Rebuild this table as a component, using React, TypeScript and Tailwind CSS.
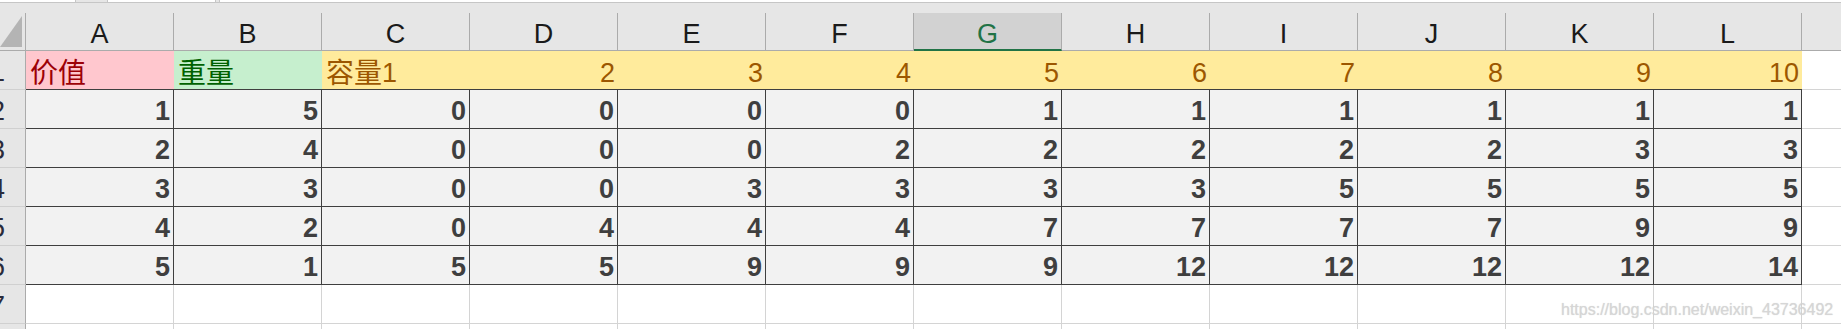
const COLS = ["A", "B", "C", "D", "E", "F", "G", "H", "I", "J", "K", "L"];

const HEAD_ROW = ["价值", "重量", "容量1", "2", "3", "4", "5", "6", "7", "8", "9", "10"];

const DATA: number[][] = [
  [1, 5, 0, 0, 0, 0, 1, 1, 1, 1, 1, 1],
  [2, 4, 0, 0, 0, 2, 2, 2, 2, 2, 3, 3],
  [3, 3, 0, 0, 3, 3, 3, 3, 5, 5, 5, 5],
  [4, 2, 0, 4, 4, 4, 7, 7, 7, 7, 9, 9],
  [5, 1, 5, 5, 9, 9, 9, 12, 12, 12, 12, 14],
];

/** Clipped row number on the left edge (sheet is scrolled a little to the right). */
function RowHead({ n, h = "h-[39px]" }: { n: number; h?: string }) {
  return (
    <div
      className={`${h} w-[26px] shrink-0 overflow-hidden bg-[#e6e6e6] border-r border-b border-r-[#ababab] border-b-[#d0d0d0] flex justify-end pr-[20px] pt-[8px] text-[27px] leading-[27px] text-[#2b2b3a]`}
    >
      <span className="whitespace-nowrap">{n}</span>
    </div>
  );
}

function StyledHeadCell({ i, text }: { i: number; text: string }) {
  // Excel cell styles: Bad / Good / Neutral
  const tone =
    i === 0
      ? "bg-[#ffc7ce] text-[#9c0006] justify-start pl-[4px]"
      : i === 1
        ? "bg-[#c6efce] text-[#006100] justify-start pl-[4px]"
        : i === 2
          ? "bg-[#ffeb9c] text-[#9c5700] justify-start pl-[4px]"
          : "bg-[#ffeb9c] text-[#9c5700] justify-end pr-[3px]";
  const cjk = text.match(/^[^\d]+/)?.[0] ?? "";
  const rest = text.slice(cjk.length);
  return (
    <div
      className={`${tone} w-[148px] shrink-0 h-[39px] border-b border-[#3f3f3f] flex pt-[9px] text-[27px] leading-[27px] whitespace-nowrap`}
    >
      {cjk && <span className="text-[28px]">{cjk}</span>}
      {rest}
    </div>
  );
}

function EmptyRow({ n, h = "h-[39px]" }: { n: number; h?: string }) {
  return (
    <div className="flex">
      <RowHead n={n} h={h} />
      {COLS.map((c) => (
        <div key={c} className={`${h} w-[148px] shrink-0 border-r border-b border-[#d4d4d4]`} />
      ))}
      <div className={`${h} flex-1 border-b border-[#d4d4d4]`} />
    </div>
  );
}

export default function App() {
  return (
    <div className="relative w-[1841px] h-[329px] overflow-hidden bg-white font-['Liberation_Sans','Noto_Sans_CJK_SC',sans-serif]">
      {/* bottom edge of the formula bar + gap */}
      <div className="h-[13px] bg-[#e6e6e6]">
        <div className="flex h-[3px]">
          <div className="w-[76px] bg-white border-b border-r border-[#c6c6c6]" />
          <div className="w-[31px] border-b border-[#c6c6c6]" />
          <div className="w-[109px] bg-white border-b border-x border-[#c6c6c6]" />
          <div className="w-[3px] border-b border-[#c6c6c6]" />
          <div className="flex-1 bg-white border-b border-l border-[#c6c6c6]" />
        </div>
      </div>

      {/* column headers */}
      <div className="flex h-[38px]">
        <div className="w-[26px] shrink-0 bg-[#e6e6e6] border-r border-b border-[#ababab] flex items-start pt-[3px]">
          <svg width="23" height="31" viewBox="0 0 23 31">
            <polygon points="22,0 22,31 0,31" fill="#b4b4b4" />
          </svg>
        </div>
        {COLS.map((c) =>
          c === "G" ? (
            <div
              key={c}
              className="w-[148px] shrink-0 bg-[#d2d2d2] border-r border-r-[#ababab] border-b-2 border-b-[#217346] flex justify-center pt-[8px] text-[27px] leading-[27px] text-[#217346]"
            >
              {c}
            </div>
          ) : (
            <div
              key={c}
              className="w-[148px] shrink-0 bg-[#e6e6e6] border-r border-b border-[#ababab] flex justify-center pt-[8px] text-[27px] leading-[27px] text-[#1a1a1a]"
            >
              {c}
            </div>
          )
        )}
        <div className="flex-1 bg-[#e6e6e6] border-b border-[#ababab]" />
      </div>

      {/* row 1 */}
      <div className="flex">
        <RowHead n={1} />
        {HEAD_ROW.map((t, i) => (
          <StyledHeadCell key={i} i={i} text={t} />
        ))}
        <div className="h-[39px] flex-1 border-b border-[#d4d4d4]" />
      </div>

      {/* rows 2-6, "Output" style */}
      {DATA.map((row, r) => (
        <div key={r} className="flex">
          <RowHead n={r + 2} />
          {row.map((v, i) => (
            <div
              key={i}
              className="w-[148px] shrink-0 h-[39px] bg-[#f2f2f2] border-r border-b border-[#3f3f3f] flex justify-end pr-[3px] pt-[8px] text-[27px] leading-[27px] font-bold text-[#3f3f3f]"
            >
              {v}
            </div>
          ))}
          <div className="h-[39px] flex-1 border-b border-[#d4d4d4]" />
        </div>
      ))}

      <EmptyRow n={7} />
      <EmptyRow n={8} />

      {/* blog watermark */}
      <div className="absolute left-[1561px] top-[302px] text-[16px] leading-[16px] text-[#d6d6d6] whitespace-nowrap [text-shadow:0_0_1px_rgba(160,160,160,0.4)]">
        https://blog.csdn.net/weixin_43736492
      </div>
    </div>
  );
}
